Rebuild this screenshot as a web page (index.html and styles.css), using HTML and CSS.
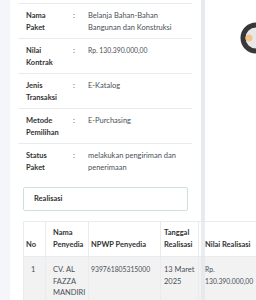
FILE: index.html
```html
<!DOCTYPE html>
<html lang="id">
<head>
  <meta charset="UTF-8" />
  <meta name="viewport" content="width=device-width, initial-scale=1.0"/>
  <title>Detail Paket</title>
  <link rel="stylesheet" href="styles.css">
</head>
<body>
  <div class="page">
    <div class="card main">
      <div class="row">
        <div class="label">Nama Paket</div>
        <div class="colon">:</div>
        <div class="value">Belanja Bahan-Bahan Bangunan dan Konstruksi</div>
      </div>
      <div class="row">
        <div class="label">Nilai Kontrak</div>
        <div class="colon">:</div>
        <div class="value"><span class="num">Rp. 130.390.000,00</span></div>
      </div>
      <div class="row">
        <div class="label">Jenis Transaksi</div>
        <div class="colon">:</div>
        <div class="value">E-Katalog</div>
      </div>
      <div class="row">
        <div class="label">Metode Pemilihan</div>
        <div class="colon">:</div>
        <div class="value">E-Purchasing</div>
      </div>
      <div class="row">
        <div class="label">Status Paket</div>
        <div class="colon">:</div>
        <div class="value">melakukan pengiriman dan penerimaan</div>
      </div>

      <div class="section">
        <div class="section-title">Realisasi</div>
        <table class="realisasi">
          <thead>
            <tr>
              <th class="c-no">No</th>
              <th class="c-nama">Nama Penyedia</th>
              <th class="c-npwp">NPWP Penyedia</th>
              <th class="c-tgl">Tanggal Realisasi</th>
              <th class="c-nilai">Nilai Realisasi</th>
            </tr>
          </thead>
          <tbody>
            <tr>
              <td class="c-no">1</td>
              <td class="c-nama">CV. AL FAZZA MANDIRI</td>
              <td class="c-npwp"><span class="num">939761805315000</span></td>
              <td class="c-tgl">13 Maret 2025</td>
              <td class="c-nilai"><span class="num">Rp. 130.390.000,00</span></td>
            </tr>
          </tbody>
        </table>
      </div>
    </div>

    <div class="card side">
      <svg class="avatar" width="34" height="34" viewBox="0 0 34 34">
        <circle cx="17" cy="17" r="13" fill="#e8e8e8" stroke="#383838" stroke-width="5"/>
        <circle cx="10" cy="17" r="3.5" fill="#f2c48c"/>
      </svg>
    </div>
    <div class="divider"></div>
  </div>
</body>
</html>
```

FILE: styles.css
```css
body {
  margin: 0;
  background: #f4f6f9;
  font-family: 'Lato', sans-serif;
  font-size: 7.5px;
  color: #495057;
  overflow: hidden;
}
.page {
  position: relative;
  display: flex;
  gap: 4px;
  padding-left: 10px;
  height: 300px;
  overflow: hidden;
}
.card {
  background: #fff;
}
.main {
  width: 191px;
  flex: none;
  padding: 3px 9px 0 8px;
  box-sizing: border-box;
}
.side {
  flex: 1;
  position: relative;
}
.avatar {
  position: absolute;
  left: 34px;
  top: 21px;
}
.num {
  font-size: 6.8px;
}

/* detail rows */
.row {
  display: flex;
  border-top: 1px solid #e9ecef;
  padding: 6px 0 0 8px;
  height: 28px;
  line-height: 11.5px;
}
.label {
  width: 38px;
  margin-right: 9px;
  font-weight: bold;
  color: #333;
}
.colon {
  width: 15px;
}
.value {
  flex: 1;
  padding-right: 6px;
}

/* realisasi */
.section {
  margin: 9px 0 0 5px;
}
.section-title {
  border: 1px solid #cfe0e0;
  border-radius: 2px;
  height: 22px;
  line-height: 22px;
  padding-left: 10px;
  width: 153px;
  font-weight: bold;
  color: #333;
}
.realisasi {
  position: relative;
  z-index: 1;
  margin-top: 10px;
  border-collapse: collapse;
  table-layout: fixed;
  width: 238px;
  line-height: 11.5px;
}
.realisasi th,
.realisasi td {
  box-sizing: border-box;
  border: 1px solid #e9ecef;
  padding-right: 2px;
}
.realisasi th {
  background: #fff;
  color: #333;
  font-weight: bold;
  text-align: left;
  vertical-align: bottom;
  height: 34px;
  padding-top: 5px;
  padding-bottom: 6px;
}
.realisasi td {
  background: #f2f2f2;
  vertical-align: top;
  padding-top: 7px;
  padding-bottom: 7px;
}
.realisasi .c-no { width: 22px; padding-left: 7px; }
.realisasi th.c-no { padding-left: 2px; }
.realisasi .c-nama { width: 43px; padding-left: 7px; }
.realisasi .c-npwp { width: 72px; padding-left: 2px; }
.realisasi .c-tgl { width: 38px; padding-left: 3px; }
.realisasi .c-nilai { width: 63px; padding-left: 6px; }

.divider {
  position: absolute;
  left: 201px;
  top: 0;
  width: 4px;
  height: 300px;
  background: rgba(225, 230, 236, 0.7);
  z-index: 2;
}
```
